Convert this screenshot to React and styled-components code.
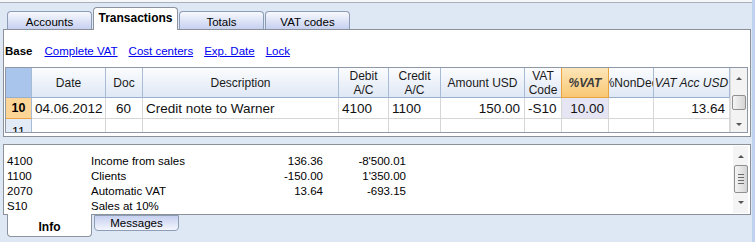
import React from "react";
import styled, { createGlobalStyle, css } from "styled-components";

const Global = createGlobalStyle`
  html, body { margin: 0; padding: 0; }
  body {
    background: #dee8f5;
    font-family: "Liberation Sans", Arial, sans-serif;
    font-size: 11px;
    color: #000;
  }
`;

const Frame = styled.div`
  width: 752px;
  height: 242px;
  border-right: 3px solid #bfd3f0;
  background: #dee8f5;
  position: relative;
  overflow: hidden;
`;

const TopEdge = styled.div`
  height: 2px;
  background: #f6f7f9;
  border-bottom: 1px solid #a9b0bb;
`;

const TabStrip = styled.div`
  display: flex;
  align-items: flex-end;
  gap: 1px;
  padding-left: 7px;
  height: 27px;
  margin-bottom: -1px;
  position: relative;
  z-index: 2;
`;

const Tab = styled.div`
  width: 85px;
  box-sizing: border-box;
  display: flex;
  align-items: center;
  justify-content: center;
  border: 1px solid #8e9db6;
  border-bottom: none;
  border-radius: 4px 4px 0 0;
  font-size: 11.5px;
  ${(p) =>
    p.$active
      ? css`
          height: 23px;
          background: #fff;
          font-weight: bold;
          font-size: 12px;
          padding-bottom: 2px;
          border-color: #8c939e;
        `
      : css`
          height: 18px;
          background: linear-gradient(#f8f9fe, #c6d0f0);
          margin-bottom: 1px;
          padding-top: 2px;
        `}
`;

const Panel = styled.div`
  margin: 0 1px 0 3px;
  border: 1px solid #8c9199;
  background: #fff;
  height: 106px;
  display: flex;
  flex-direction: column;
  box-sizing: content-box;
`;

const LinkBar = styled.div`
  height: 37px;
  display: flex;
  align-items: center;
  gap: 11px;
  padding: 5px 0 0 1px;
  box-sizing: border-box;
`;

const BaseLabel = styled.span`
  font-weight: bold;
  font-size: 11.5px;
  margin-right: 1px;
`;

const Link = styled.a`
  color: #0000f0;
  text-decoration: underline;
  font-size: 11.5px;
  cursor: pointer;
`;

const cols = "26px 74px 37px 196px 50px 52px 84px 37px 47px 45px 76px 1fr";

const Grid = styled.div`
  margin: 0 2px 0 1px;
  border: 1px solid #8f98a6;
  height: 64px;
  overflow: hidden;
  display: grid;
  grid-template-columns: ${cols};
  grid-template-rows: 30px 21px 21px;
  font-family: "Liberation Sans", Arial, sans-serif;
`;

const HeadCell = styled.div`
  box-sizing: border-box;
  border-right: 1px solid #a8bbd5;
  border-bottom: 1px solid #97aecd;
  background: ${(p) =>
    p.$hot
      ? "linear-gradient(#fde6b8, #f9c774)"
      : p.$corner
      ? "#a9c5ec"
      : "linear-gradient(#fbfcfe, #dfe8f5)"};
  ${(p) => p.$hot && css`border-color: #e9a341; border-right: 1px solid #e9a341; border-left: 1px solid #e9a341; margin-left: -1px;`}
  display: flex;
  align-items: center;
  justify-content: center;
  text-align: center;
  font-size: 12px;
  line-height: 14px;
  color: ${(p) => (p.$hot ? "#3c3c3c" : "#1a1a1a")};
  font-style: ${(p) => (p.$italic ? "italic" : "normal")};
  font-weight: ${(p) => (p.$bold ? "bold" : "normal")};
  white-space: nowrap;
  overflow: hidden;
  padding-top: 1px;
`;

const RowHead = styled.div`
  box-sizing: border-box;
  background: ${(p) => (p.$current ? "#fdd597" : "#e3ebf6")};
  border-right: 1px solid #a8bbd5;
  border-bottom: 1px solid ${(p) => (p.$current ? "#eba347" : "#c9d6e8")};
  display: flex;
  align-items: center;
  justify-content: center;
  font-size: 12.5px;
  font-weight: ${(p) => (p.$current ? "bold" : "normal")};
  padding-top: ${(p) => (p.$current ? "0" : "6px")};
`;

const Cell = styled.div`
  box-sizing: border-box;
  border-right: 1px solid #d6d6d6;
  border-bottom: 1px solid #d6d6d6;
  display: flex;
  align-items: center;
  justify-content: ${(p) =>
    p.$align === "right" ? "flex-end" : p.$align === "center" ? "center" : "flex-start"};
  padding: 1px 4px 0 3px;
  font-size: 13.5px;
  color: #111;
  white-space: nowrap;
  overflow: hidden;
  background: ${(p) => (p.$selected ? "#e5e5f4" : "#fff")};
`;

const VScroll = styled.div`
  grid-column: 12;
  grid-row: 1 / span 3;
  background: #f3f3f3;
  border-left: 1px solid #dcdcdc;
  display: flex;
  flex-direction: column;
  align-items: center;
`;

const Arrow = styled.div`
  width: 0;
  height: 0;
  border-left: 3px solid transparent;
  border-right: 3px solid transparent;
  ${(p) =>
    p.$down
      ? css`border-top: 3px solid #555;`
      : css`border-bottom: 3px solid #555;`}
`;

const Thumb = styled.div`
  width: 14px;
  box-sizing: border-box;
  height: ${(p) => p.$h}px;
  border: 1px solid #8e8f8f;
  border-radius: 2px;
  background: linear-gradient(90deg, #f4f4f4, #e2e2e2 60%, #d4d4d4);
  display: flex;
  flex-direction: column;
  align-items: center;
  justify-content: center;
  gap: 2px;
`;

const Grip = styled.div`
  width: 6px;
  height: 1px;
  background: #6b6b6b;
`;

const Gap = styled.div`
  height: ${(p) => p.$h}px;
`;

const InfoPanel = styled.div`
  margin: 7px 1px 0 3px;
  border: 1px solid #8c9199;
  background: #fff;
  height: 69px;
  display: flex;
  position: relative;
  z-index: 1;
`;

const InfoRows = styled.div`
  flex: 1;
  padding: 8px 0 0 3px;
`;

const InfoRow = styled.div`
  display: grid;
  grid-template-columns: 84px 155px 77px 83px;
  height: 15px;
  align-items: center;
  font-size: 11.5px;
`;

const Num = styled.span`
  text-align: right;
`;

const InfoScroll = styled.div`
  width: 15px;
  margin: 1px 2px 1px 0;
  background: #f4f4f4;
  display: flex;
  flex-direction: column;
  align-items: center;
`;

const BottomTabs = styled.div`
  display: flex;
  gap: 2px;
  padding-left: 7px;
  margin-top: -1px;
  position: relative;
  z-index: 2;
`;

const BottomTab = styled.div`
  width: 85px;
  box-sizing: border-box;
  display: flex;
  align-items: center;
  justify-content: center;
  border: 1px solid #8e9db6;
  border-top: none;
  border-radius: 0 0 4px 4px;
  font-size: 11.5px;
  ${(p) =>
    p.$active
      ? css`
          height: 23px;
          background: #fff;
          font-weight: bold;
          font-size: 12px;
          padding-top: 3px;
          border-color: #8c939e;
        `
      : css`
          height: 16px;
          margin-top: 1px;
          background: linear-gradient(#c6d0f0, #f4f6fd);
          border-top: 1px solid #8e9db6;
          padding-bottom: 1px;
        `}
`;

const headers = [
  { t: "Date" },
  { t: "Doc" },
  { t: "Description" },
  { t: ["Debit", "A/C"] },
  { t: ["Credit", "A/C"] },
  { t: "Amount USD" },
  { t: ["VAT", "Code"] },
  { t: "%VAT", hot: true },
  { t: "%NonDed" },
  { t: "VAT Acc USD", italic: true },
];

const row10 = [
  { v: "04.06.2012" },
  { v: "60", a: "center" },
  { v: "Credit note to Warner" },
  { v: "4100" },
  { v: "1100" },
  { v: "150.00", a: "right" },
  { v: "-S10" },
  { v: "10.00", a: "right", sel: true },
  { v: "" },
  { v: "13.64", a: "right" },
];

const info = [
  ["4100", "Income from sales", "136.36", "-8'500.01"],
  ["1100", "Clients", "-150.00", "1'350.00"],
  ["2070", "Automatic VAT", "13.64", "-693.15"],
  ["S10", "Sales at 10%", "", ""],
];

export default function App() {
  return (
    <>
      <Global />
      <Frame>
        <TopEdge />
        <TabStrip>
          <Tab>Accounts</Tab>
          <Tab $active>Transactions</Tab>
          <Tab>Totals</Tab>
          <Tab>VAT codes</Tab>
        </TabStrip>
        <Panel>
          <LinkBar>
            <BaseLabel>Base</BaseLabel>
            <Link>Complete VAT</Link>
            <Link>Cost centers</Link>
            <Link>Exp. Date</Link>
            <Link>Lock</Link>
          </LinkBar>
          <Grid>
            <HeadCell $corner />
            {headers.map((h, i) => (
              <HeadCell
                key={i}
                $hot={h.hot}
                $bold={h.hot}
                $italic={h.hot || h.italic}
              >
                {Array.isArray(h.t) ? (
                  <span>
                    {h.t[0]}
                    <br />
                    {h.t[1]}
                  </span>
                ) : (
                  h.t
                )}
              </HeadCell>
            ))}
            <VScroll>
              <Gap $h={9} />
              <Arrow />
              <Gap $h={15} />
              <Thumb $h={15} />
              <Gap $h={13} />
              <Arrow $down />
            </VScroll>
            <RowHead $current>10</RowHead>
            {row10.map((c, i) => (
              <Cell key={i} $align={c.a} $selected={c.sel}>
                {c.v}
              </Cell>
            ))}
            <RowHead>11</RowHead>
            {row10.map((c, i) => (
              <Cell key={i} />
            ))}
          </Grid>
        </Panel>
        <InfoPanel>
          <InfoRows>
            {info.map((r, i) => (
              <InfoRow key={i}>
                <span>{r[0]}</span>
                <span>{r[1]}</span>
                <Num>{r[2]}</Num>
                <Num>{r[3]}</Num>
              </InfoRow>
            ))}
          </InfoRows>
          <InfoScroll>
            <Gap $h={9} />
            <Arrow />
            <Gap $h={7} />
            <Thumb $h={28}>
              <Grip />
              <Grip />
              <Grip />
              <Grip />
            </Thumb>
            <Gap $h={8} />
            <Arrow $down />
          </InfoScroll>
        </InfoPanel>
        <BottomTabs>
          <BottomTab $active>Info</BottomTab>
          <BottomTab>Messages</BottomTab>
        </BottomTabs>
      </Frame>
    </>
  );
}
